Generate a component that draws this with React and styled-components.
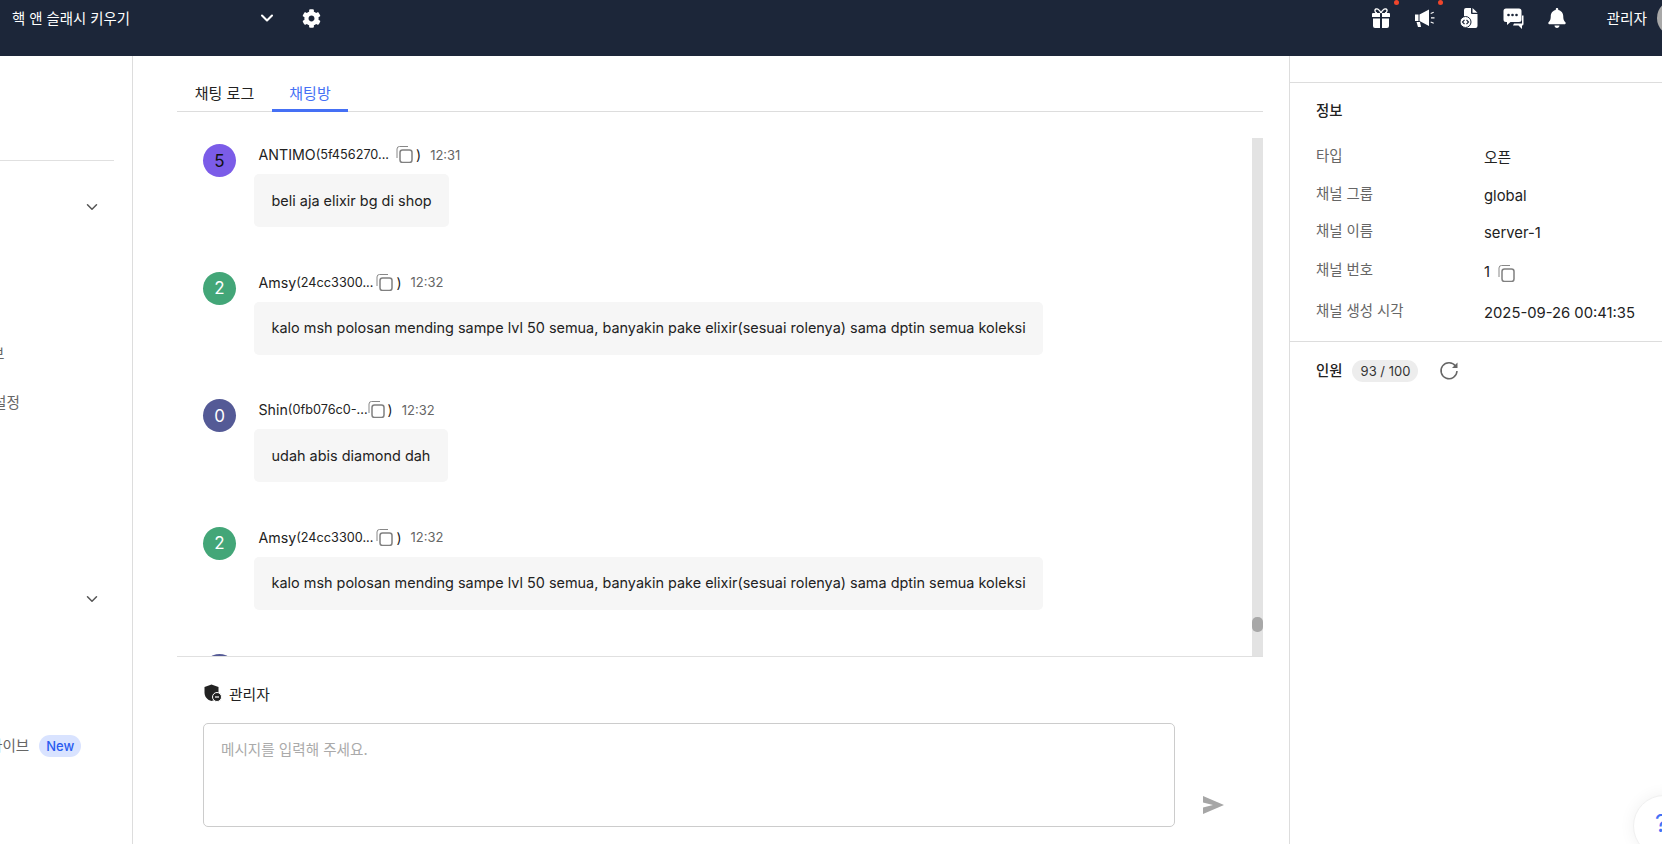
import React from 'react';
import styled, { createGlobalStyle } from 'styled-components';
import { FaBell, FaCog } from 'react-icons/fa';
import { ChevronDown } from 'lucide-react';

const GlobalStyle = createGlobalStyle`
  * {
    box-sizing: border-box;
  }

  html, body {
    margin: 0;
    padding: 0;
    height: 100%;
    overflow: hidden;
    background: #ffffff;
  }

  body {
    font-family: Inter, 'Noto Sans CJK KR', sans-serif;
    color: #222222;
  }
`;

const Page = styled.div`
  position: relative;
  width: 1662px;
  height: 844px;
  display: flex;
  flex-direction: column;
  overflow: hidden;
`;

const Header = styled.header`
  flex: 0 0 56px;
  background: #1c2639;
  color: #ffffff;
  display: flex;
  justify-content: space-between;
  align-items: flex-start;
`;

const HeaderLeft = styled.div`
  height: 36px;
  display: flex;
  align-items: center;
  padding-left: 12px;
`;

const ProjectName = styled.div`
  width: 245px;
  padding-bottom: 2px;
  font-size: 14.4px;
`;

const SettingsIcon = styled(FaCog)`
  width: 19px;
  height: 19px;
  margin-left: 25px;
`;

const HeaderRight = styled.div`
  height: 36px;
  display: flex;
  align-items: center;
`;

const IconSlot = styled.div`
  position: relative;
  width: 44px;
  height: 24px;
  display: flex;
  align-items: center;
  justify-content: center;
`;

const Dot = styled.span`
  position: absolute;
  top: -6px;
  right: 4px;
  width: 5px;
  height: 5px;
  border-radius: 50%;
  background: #f0452b;
`;

const UserName = styled.div`
  margin-left: 27px;
  padding-bottom: 2px;
  font-size: 14.7px;
`;

const UserAvatar = styled.div`
  width: 36px;
  height: 36px;
  margin-left: 10px;
  margin-right: -31px;
  border-radius: 50%;
  background: #a8a8a8;
`;

const Body = styled.div`
  flex: 1;
  min-height: 0;
  display: grid;
  grid-template-columns: 133px 1fr 372px;
`;

const Sidebar = styled.aside`
  border-right: 1px solid #dddddd;
  overflow: hidden;
  padding-top: 104px;
`;

const SideRule = styled.div`
  width: 114px;
  height: 1px;
  background: #e0e0e0;
  margin-bottom: 21px;
`;

const SideRow = styled.div`
  width: 114px;
  height: 49px;
  padding-right: 13px;
  display: flex;
  align-items: center;
  font-size: 14.6px;
  color: #666666;
  white-space: nowrap;
`;

const SideLabel = styled.span`
  margin-left: ${props => props.$shift}px;
  padding-bottom: 2px;
`;

const SideChevron = styled(ChevronDown)`
  margin-left: auto;
  color: #555555;
`;

const NewBadge = styled.span`
  margin-left: 10px;
  height: 22px;
  padding: 0 7px;
  border-radius: 11px;
  background: #d9e3ff;
  color: #2a5cf0;
  font-size: 13px;
  font-weight: 500;
  line-height: 22px;
`;

const Main = styled.main`
  min-width: 0;
  padding: 19px 26px 0 44px;
  border-right: 1px solid #dddddd;
  display: flex;
  flex-direction: column;
`;

const Tabs = styled.div`
  display: flex;
  height: 37px;
  flex: 0 0 37px;
  border-bottom: 1px solid #dddddd;
`;

const Tab = styled.div`
  width: ${props => props.$width}px;
  height: 37px;
  display: flex;
  align-items: center;
  justify-content: center;
  font-size: 15px;
  color: ${props => (props.$active ? '#4570f5' : '#222222')};
  border-bottom: 3px solid ${props => (props.$active ? '#4570f5' : 'transparent')};
`;

const ChatArea = styled.div`
  flex: 0 0 519px;
  margin-top: 26px;
  display: flex;
  border-bottom: 1px solid #e0e0e0;
  overflow: hidden;
`;

const MessageList = styled.div`
  flex: 1;
  padding: 6px 0 0 26px;
  overflow: hidden;
`;

const ScrollTrack = styled.div`
  flex: 0 0 11px;
  background: #e3e3e3;
  padding-top: 479px;
`;

const ScrollThumb = styled.div`
  height: 15px;
  border-radius: 5px;
  background: #a8a8a8;
`;

const Message = styled.div`
  display: flex;
  gap: 18px;
  margin-bottom: 44.5px;
`;

const Avatar = styled.div`
  flex: 0 0 33px;
  width: 33px;
  height: 33px;
  border-radius: 50%;
  background: ${props => props.$bg};
  color: ${props => props.$fg};
  display: flex;
  align-items: center;
  justify-content: center;
  font-size: 17px;
`;

const MessageBody = styled.div`
  min-width: 0;
`;

const MetaRow = styled.div`
  height: 30px;
  padding: 0 0 9px 4.5px;
  display: flex;
  align-items: center;
  font-size: 14.2px;
  color: #222222;
`;

const UserId = styled.span`
  font-size: 12.7px;
`;

const CopyGlyph = styled.svg`
  flex: none;
  width: 17px;
  height: 17px;
  margin: ${props => props.$margin || '0'};
`;

const Closing = styled.span`
  font-size: 14px;
`;

const Time = styled.span`
  margin-left: 9px;
  font-size: 13px;
  color: #666666;
`;

const Bubble = styled.div`
  display: inline-flex;
  align-items: center;
  height: 53px;
  padding: 0 17.5px 1px;
  border-radius: 5px;
  background: #f6f6f6;
  font-size: 14.45px;
  color: #222222;
  white-space: nowrap;
`;

const Composer = styled.div`
  padding: 24px 0 0 26px;
`;

const Author = styled.div`
  display: flex;
  align-items: center;
  gap: 7px;
  height: 24px;
  margin-left: 1px;
  font-size: 14.8px;
`;

const ComposerRow = styled.div`
  margin-top: 18px;
  display: flex;
  align-items: flex-end;
  gap: 28px;
`;

const MessageInput = styled.textarea`
  width: 972px;
  height: 104px;
  padding: 14px 17px;
  border: 1px solid #cccccc;
  border-radius: 5px;
  outline: none;
  resize: none;
  font-family: inherit;
  font-size: 14.6px;
  color: #222222;

  &::placeholder {
    color: #aaaaaa;
  }
`;

const SendIcon = styled.svg`
  width: 21px;
  height: 18px;
  margin-bottom: 13px;
`;

const InfoPanel = styled.aside`
  min-width: 0;
`;

const PanelTop = styled.div`
  height: 27px;
  border-bottom: 1px solid #dddddd;
`;

const InfoSection = styled.section`
  height: 259px;
  padding: 19px 0 0 26px;
  border-bottom: 1px solid #dddddd;
`;

const SectionTitle = styled.div`
  font-size: 14.4px;
  font-weight: 500;
  color: #222222;
  height: 17px;
  line-height: 17px;
  margin-bottom: 27px;
`;

const InfoRow = styled.div`
  display: grid;
  grid-template-columns: 168px 1fr;
  height: ${props => props.$height}px;
  line-height: 20px;
`;

const InfoLabel = styled.div`
  font-size: 14.4px;
  color: #666666;
`;

const InfoValue = styled.div`
  display: flex;
  align-items: center;
  height: 20px;
  margin-top: 2px;
  font-size: 14.8px;
  color: #222222;
`;

const MemberRow = styled.div`
  height: 58px;
  padding: 18px 0 0 26px;
  display: flex;
  align-items: flex-start;
`;

const MemberTitle = styled.div`
  height: 22px;
  line-height: 22px;
  font-size: 14.4px;
  font-weight: 500;
`;

const MemberCount = styled.div`
  margin-left: 10px;
  width: 66px;
  height: 22px;
  border-radius: 11px;
  background: #ededed;
  font-size: 13px;
  line-height: 22px;
  text-align: center;
  color: #333333;
`;

const RefreshIcon = styled.svg`
  width: 20px;
  height: 20px;
  margin: 1px 0 0 21px;
`;

const HelpButton = styled.div`
  position: absolute;
  left: 1633px;
  top: 795px;
  width: 62px;
  height: 62px;
  border-radius: 50%;
  background: #ffffff;
  border: 1px solid #f0f0f0;
  box-shadow: 0 0 16px rgba(0, 0, 0, 0.06);
  padding: 13px 0 0 21px;
  color: #4570f5;
  font-size: 24px;
  line-height: 30px;
`;

const CopyIcon = ({ margin }) => (
  <CopyGlyph $margin={margin} viewBox="0 0 17 17" fill="none">
    <path d="M1 12V3A2.5 2.5 0 0 1 3.500 .5H12" stroke="#888888" strokeWidth="1" />
    <rect x="4" y="4" width="12" height="12.500" rx="2.500" stroke="#808080" strokeWidth="1.500" />
  </CopyGlyph>
);

const GiftIcon = () => (
  <svg width="18" height="20" viewBox="0 0 18 20" fill="#ffffff">
    <path d="M9 5C7 1 5.500 .5 4 1S2.500 4.500 5 5M9 5c2-4 3.500-4.500 5-4s1.500 3.500-1 4" fill="none" stroke="#ffffff" strokeWidth="1.400" />
    <path d="M1 5h7v4H0V6a1 1 0 0 1 1-1zM10 5h7a1 1 0 0 1 1 1v3h-8zM1 10.500h7V20H3a2 2 0 0 1-2-2zM10 10.500h7V18a2 2 0 0 1-2 2h-5z" />
  </svg>
);

const MegaphoneIcon = () => (
  <svg width="20" height="18" viewBox="0 0 20 18" fill="#ffffff">
    <path d="M0 5.500h3.500v6.500H0zM4.500 5.500L14 .5V17L4.500 12z" />
    <path d="M1.500 13h3.500l1 5H3z" />
    <path d="M15.500 4l3-1.300.4 1-3 1.300zM16 8.200h3.500v1.200H16zM15.500 13.500l.4-1 3 1.300-.4 1z" />
  </svg>
);

const FileCodeIcon = () => (
  <svg width="18" height="20" viewBox="0 0 18 20">
    <path d="M4 2a2 2 0 0 1 2-2h5v5a1 1 0 0 0 1 1h5.500v12a2 2 0 0 1-2 2H4z" fill="#ffffff" />
    <path d="M12.500 0l5 4.800h-5z" fill="#ffffff" />
    <circle cx="5.500" cy="14" r="5.500" fill="#ffffff" stroke="#1c2639" strokeWidth="1" />
    <path d="M4.500 11.800L2.500 14l2 2.200M6.500 11.800l2 2.200-2 2.200" fill="none" stroke="#1c2639" strokeWidth="1.200" />
  </svg>
);

const ChatIcon = () => (
  <svg width="21" height="21" viewBox="0 0 21 21">
    <path d="M3 .5h13A2.500 2.500 0 0 1 18.500 3v8.500A2.500 2.500 0 0 1 16 14H7.500L4 17v-3H3A2.500 2.500 0 0 1 .5 11.500V3A2.500 2.500 0 0 1 3 .5z" fill="#ffffff" />
    <path d="M20.500 7.500V16a1.500 1.500 0 0 1-1.500 1.500V21l-3.500-3.500H10l1-2h8V7.500z" fill="#ffffff" />
    <circle cx="5.500" cy="7" r="1.300" fill="#1c2639" />
    <circle cx="9.500" cy="7" r="1.300" fill="#1c2639" />
    <circle cx="13.500" cy="7" r="1.300" fill="#1c2639" />
  </svg>
);

const ShieldIcon = () => (
  <svg width="18" height="18" viewBox="0 0 18 18">
    <path d="M7.500 0.500L14.500 3V8.500C14.500 13 11.500 16 7.500 17C3.500 16 0.500 13 0.500 8.500V3z" fill="#222222" />
    <circle cx="13" cy="13" r="4.500" fill="#222222" stroke="#ffffff" strokeWidth="1" />
    <path d="M11 13h4" stroke="#ffffff" strokeWidth="1.200" />
  </svg>
);

const sideRows = [
  { chevron: true },
  {},
  {},
  { label: '보', shift: -9 },
  { label: '설정', shift: -7 },
  {},
  {},
  {},
  { chevron: true },
  {},
  {},
  { label: '라이브', shift: -11, isNew: true },
];

const longText = 'kalo msh polosan mending sampe lvl 50 semua, banyakin pake elixir(sesuai rolenya) sama dptin semua koleksi';

const messages = [
  { level: 5, bg: '#7b5ce8', fg: '#111111', name: 'ANTIMO', id: '(5f456270...', gap: 7, time: '12:31', text: 'beli aja elixir bg di shop' },
  { level: 2, bg: '#43a678', fg: '#ffffff', name: 'Amsy', id: '(24cc3300...', gap: 3, time: '12:32', text: longText },
  { level: 0, bg: '#545a96', fg: '#ffffff', name: 'Shin', id: '(0fb076c0-...', gap: 0, time: '12:32', text: 'udah abis diamond dah' },
  { level: 2, bg: '#43a678', fg: '#ffffff', name: 'Amsy', id: '(24cc3300...', gap: 3, time: '12:32', text: longText },
  { level: 0, bg: '#545a96', fg: '#ffffff', name: 'Shin', id: '(0fb076c0-...', gap: 0, time: '12:33', text: 'udah abis diamond dah' },
];

const infoRows = [
  { label: '타입', value: '오픈', height: 38 },
  { label: '채널 그룹', value: 'global', height: 37 },
  { label: '채널 이름', value: 'server-1', height: 39 },
  { label: '채널 번호', value: '1', height: 41, copy: true },
  { label: '채널 생성 시각', value: '2025-09-26 00:41:35', height: 30 },
];

export default function App() {
  return (
    <Page>
      <GlobalStyle />
      <Header>
        <HeaderLeft>
          <ProjectName>핵 앤 슬래시 키우기</ProjectName>
          <ChevronDown size={20} strokeWidth={2.5} />
          <SettingsIcon />
        </HeaderLeft>
        <HeaderRight>
          <IconSlot>
            <GiftIcon />
            <Dot />
          </IconSlot>
          <IconSlot>
            <MegaphoneIcon />
            <Dot />
          </IconSlot>
          <IconSlot>
            <FileCodeIcon />
          </IconSlot>
          <IconSlot>
            <ChatIcon />
          </IconSlot>
          <IconSlot>
            <FaBell size={20} />
          </IconSlot>
          <UserName>관리자</UserName>
          <UserAvatar />
        </HeaderRight>
      </Header>
      <Body>
        <Sidebar>
          <SideRule />
          {sideRows.map((row, i) => (
            <SideRow key={i}>
              {row.label && <SideLabel $shift={row.shift}>{row.label}</SideLabel>}
              {row.isNew && <NewBadge>New</NewBadge>}
              {row.chevron && <SideChevron size={18} strokeWidth={2} />}
            </SideRow>
          ))}
        </Sidebar>
        <Main>
          <Tabs>
            <Tab $width={95}>채팅 로그</Tab>
            <Tab $width={76} $active>채팅방</Tab>
          </Tabs>
          <ChatArea>
            <MessageList>
              {messages.map((msg, i) => (
                <Message key={i}>
                  <Avatar $bg={msg.bg} $fg={msg.fg}>{msg.level}</Avatar>
                  <MessageBody>
                    <MetaRow>
                      {msg.name}
                      <UserId>{msg.id}</UserId>
                      <CopyIcon margin={`0 3px 0 ${msg.gap}px`} />
                      <Closing>)</Closing>
                      <Time>{msg.time}</Time>
                    </MetaRow>
                    <Bubble>{msg.text}</Bubble>
                  </MessageBody>
                </Message>
              ))}
            </MessageList>
            <ScrollTrack>
              <ScrollThumb />
            </ScrollTrack>
          </ChatArea>
          <Composer>
            <Author>
              <ShieldIcon />
              관리자
            </Author>
            <ComposerRow>
              <MessageInput placeholder="메시지를 입력해 주세요." />
              <SendIcon viewBox="0 0 21 18">
                <path d="M0 0L21 9L0 18V11.500L10 9L0 6.500z" fill="#a6a6a6" />
              </SendIcon>
            </ComposerRow>
          </Composer>
        </Main>
        <InfoPanel>
          <PanelTop />
          <InfoSection>
            <SectionTitle>정보</SectionTitle>
            {infoRows.map(row => (
              <InfoRow key={row.label} $height={row.height}>
                <InfoLabel>{row.label}</InfoLabel>
                <InfoValue>
                  {row.value}
                  {row.copy && <CopyIcon margin="2px 0 0 8px" />}
                </InfoValue>
              </InfoRow>
            ))}
          </InfoSection>
          <MemberRow>
            <MemberTitle>인원</MemberTitle>
            <MemberCount>93 / 100</MemberCount>
            <RefreshIcon viewBox="0 0 20 20" fill="none">
              <path d="M16.500 5A8 8 0 1 0 18 10" stroke="#666666" strokeWidth="1.500" />
              <path d="M18.500 1.500V7H13z" fill="#666666" />
            </RefreshIcon>
          </MemberRow>
        </InfoPanel>
      </Body>
      <HelpButton>?</HelpButton>
    </Page>
  );
}
